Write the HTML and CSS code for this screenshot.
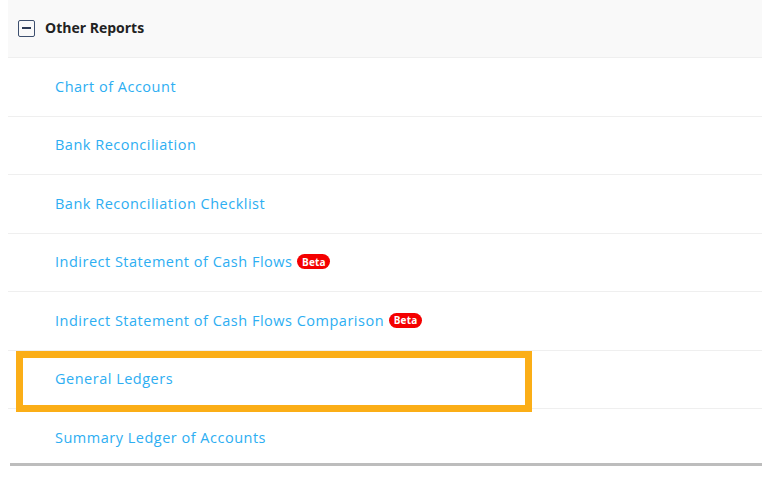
FILE: index.html
```html
<!DOCTYPE html>
<html>
<head>
<meta charset="utf-8">
<link rel="stylesheet" href="styles.css">
</head>
<body>
<div class="panel">
  <div class="header">
    <span class="toggle"><span class="minus"></span></span>
    <span class="title">Other Reports</span>
  </div>
  <ul class="list">
    <li class="row"><a class="link">Chart of Account</a></li>
    <li class="row"><a class="link">Bank Reconciliation</a></li>
    <li class="row"><a class="link">Bank Reconciliation Checklist</a></li>
    <li class="row"><a class="link">Indirect Statement of Cash Flows</a><span class="beta">Beta</span></li>
    <li class="row"><a class="link">Indirect Statement of Cash Flows Comparison</a><span class="beta">Beta</span></li>
    <li class="row"><a class="link">General Ledgers</a><span class="highlight-box"></span></li>
    <li class="row"><a class="link">Summary Ledger of Accounts</a></li>
  </ul>
</div>
</body>
</html>
```
FILE: styles.css
```css
html, body {
  margin: 0;
  padding: 0;
  background: #ffffff;
}
body {
  padding-left: 8px;
  font-family: "Open Sans", "Liberation Sans", sans-serif;
}
.panel {
  background: #ffffff;
  width: 754px;
  height: 463px;
  border-bottom: 3px solid #bdbdbd;
  position: relative;
}
.panel::before {
  content: "";
  position: absolute;
  left: 0;
  bottom: -3px;
  width: 2px;
  height: 3px;
  background: #ffffff;
}
.header {
  height: 58px;
  background: #f9f9f9;
  border-bottom: 1px solid #efefef;
  display: flex;
  align-items: center;
  padding-left: 10px;
  box-sizing: border-box;
}
.toggle {
  width: 17px;
  height: 17px;
  box-sizing: border-box;
  border: 1.5px solid #3d4f6e;
  border-radius: 2px;
  display: flex;
  align-items: center;
  justify-content: center;
  margin-right: 10px;
  margin-top: -1px;
}
.minus {
  width: 9px;
  height: 2px;
  background: #2c3a55;
}
.title {
  font-size: 14px;
  font-weight: 700;
  color: #222222;
  padding-bottom: 2px;
}
.list {
  list-style: none;
  margin: 0;
  padding: 0;
}
.row {
  height: 58.5px;
  box-sizing: border-box;
  border-bottom: 1px solid #efefef;
  display: flex;
  align-items: center;
  padding-left: 47px;
  padding-bottom: 1px;
  position: relative;
}
.row:last-child {
  border-bottom: none;
  height: 56px;
  padding-bottom: 0;
  padding-top: 1px;
}
.link {
  color: #2daef2;
  font-size: 14.5px;
  letter-spacing: 0.5px;
}
.beta {
  display: inline-flex;
  align-items: center;
  justify-content: center;
  margin-left: 5px;
  width: 33px;
  height: 15px;
  border-radius: 8px;
  background: #f40000;
  color: #ffffff;
  font-size: 10px;
  font-weight: 700;
  letter-spacing: 0.2px;
}
.highlight-box {
  position: absolute;
  left: 8px;
  top: 0;
  width: 516px;
  height: 61px;
  box-sizing: border-box;
  border: 7px solid #fbae17;
}
```
